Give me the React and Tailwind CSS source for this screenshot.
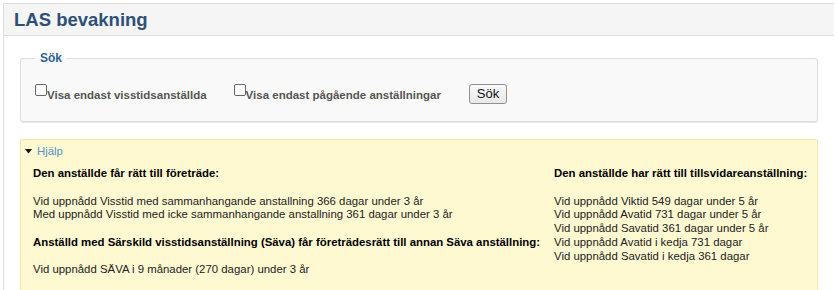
import React from "react";

function Check({ label }) {
  return (
    <label className="flex items-start">
      <span className="mt-0 box-border block h-[12px] w-[12px] rounded-[2px] border border-[#666] bg-white" />
      <span className="mt-[4px] text-[11.5px] font-bold leading-[14px] text-[#555]">{label}</span>
    </label>
  );
}

export default function App() {
  return (
    <div className="min-h-[290px] bg-white pl-[3px] pt-[3px] font-['Liberation_Sans',Arial,sans-serif]">
      <div className="w-[831px] border-l border-t border-[#dddddd]">
        <div className="flex h-[32px] items-center border-b border-[#dddddd] bg-[#f5f5f5] pl-[10px]">
          <h1 className="text-[18.5px] font-bold leading-[22px] text-[#2d5078]">LAS bevakning</h1>
        </div>
        <div className="px-[16px] pt-[15px]">
          <fieldset className="m-0 rounded-[3px] border border-[#dddddd] bg-[#f9f9f9] px-[14px] pb-[17px] pt-[19px] shadow-[0_1px_0_#e6e6e6]">
            <legend className="px-[5px] text-[12px] font-bold leading-[14px] text-[#2d5f96]">Sök</legend>
            <div className="flex items-start">
              <Check label="Visa endast visstidsanställda" />
              <div className="w-[27px]" />
              <Check label="Visa endast pågående anställningar" />
              <div className="w-[28px]" />
              <button className="box-border h-[20px] w-[38px] rounded-[3px] border border-[#8f8f8f] bg-gradient-to-b from-[#fafafa] to-[#e8e8e8] text-[13px] leading-[18px] text-[#111]">
                Sök
              </button>
            </div>
          </fieldset>
          <div className="mt-[17px] h-[160px] rounded-[2px] border border-[#f3e6a6] bg-[#fff9d1] pl-[3px] pt-[4px] text-[11.4px] leading-[13.75px] text-[#222]">
            <div className="flex items-center">
              <svg width="7" height="5" viewBox="0 0 7 5" className="ml-[1px] mr-[5px]">
                <path d="M0 0 L7 0 L3.5 4.5 Z" fill="#111" />
              </svg>
              <span className="text-[11.4px] leading-[14px] text-[#5a8fca]">Hjälp</span>
            </div>
            <div className="mt-[9px] flex pl-[9px]">
              <div className="w-[521px]">
                <p className="font-bold text-black">Den anställde får rätt till företräde:</p>
                <p className="mt-[13.75px]">Vid uppnådd Visstid med sammanhangande anstallning 366 dagar under 3 år</p>
                <p>Med uppnådd Visstid med icke sammanhangande anstallning 361 dagar under 3 år</p>
                <p className="mt-[13.75px] font-bold text-black">
                  Anställd med Särskild visstidsanställning (Säva) får företrädesrätt till annan Säva anställning:
                </p>
                <p className="mt-[13.75px]">Vid uppnådd SÄVA i 9 månader (270 dagar) under 3 år</p>
              </div>
              <div>
                <p className="font-bold text-black">Den anställde har rätt till tillsvidareanställning:</p>
                <p className="mt-[13.75px]">Vid uppnådd Viktid 549 dagar under 5 år</p>
                <p>Vid uppnådd Avatid 731 dagar under 5 år</p>
                <p>Vid uppnådd Savatid 361 dagar under 5 år</p>
                <p>Vid uppnådd Avatid i kedja 731 dagar</p>
                <p>Vid uppnådd Savatid i kedja 361 dagar</p>
              </div>
            </div>
          </div>
        </div>
      </div>
    </div>
  );
}
